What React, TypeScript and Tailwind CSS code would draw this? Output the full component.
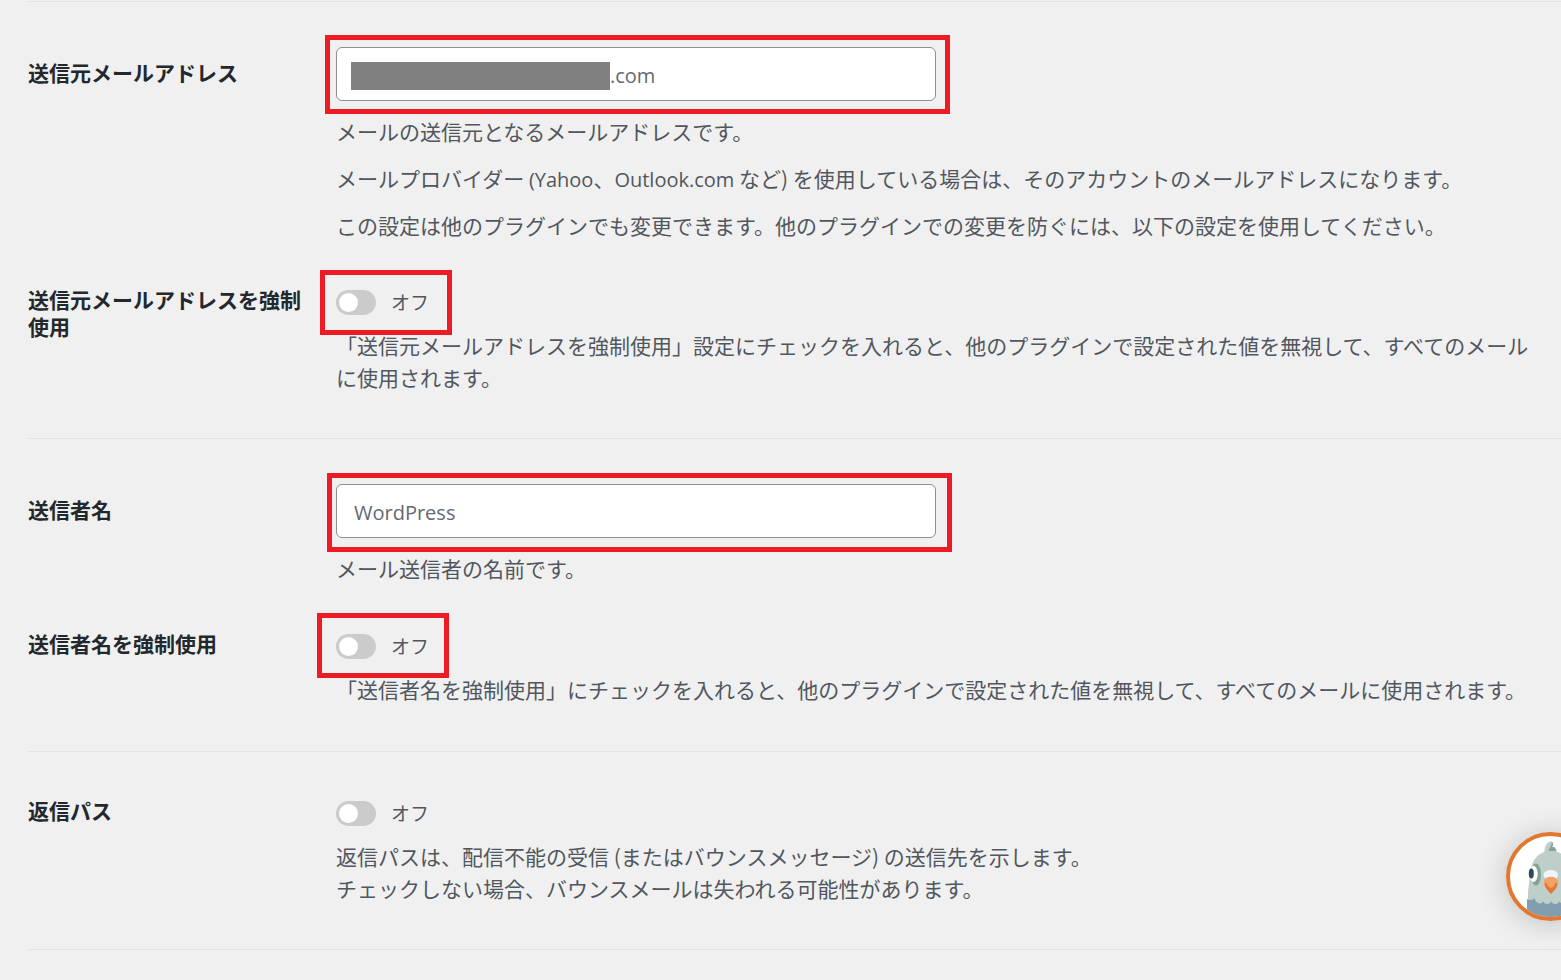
import { useState } from "react";
import type { ReactNode } from "react";

function Section({ children }: { children: ReactNode }) {
  return <section className="ml-7 flex flex-col border-b border-[#e4e4e4] pr-5">{children}</section>;
}

function Row({ id, label, className, labelClass, children }: { id: string; label: string; className: string; labelClass: string; children: ReactNode }) {
  return (
    <div className={`flex gap-7 ${className}`}>
      <div className={`w-[280px] shrink-0 ${labelClass}`}>
        <label htmlFor={id} className="block font-bold leading-[27px] text-[#23282c]">
          {label}
        </label>
      </div>
      <div className="min-w-0 flex-1">{children}</div>
    </div>
  );
}

function Toggle({ id, highlight }: { id: string; highlight?: string }) {
  const [on, setOn] = useState(false);
  return (
    <div className="relative flex h-[25px] w-fit items-center gap-[15px]">
      <input
        id={id}
        type="checkbox"
        role="switch"
        checked={on}
        onChange={(e) => setOn(e.target.checked)}
        className="relative h-[25px] w-10 appearance-none rounded-full bg-[#cbcbcb] before:absolute before:top-[3px] before:left-[3px] before:size-[19px] before:rounded-full before:bg-white checked:bg-[#e27730] checked:before:left-[18px]"
      />
      <label htmlFor={id} className="pb-0.5 text-[19px]">
        {on ? "オン" : "オフ"}
      </label>
      {highlight && <span className={`pointer-events-none absolute h-[65px] w-[132px] border-5 border-[#ed1c24] ${highlight}`} />}
    </div>
  );
}

function Latin({ children }: { children: ReactNode }) {
  return <span className="font-['Open_Sans',sans-serif] text-[20px] leading-none">{children}</span>;
}

const inputClass =
  "block h-[54px] w-full rounded-md border border-[#8c8f94] bg-white pt-0.5 pr-4 font-['Open_Sans','Noto_Sans_CJK_JP',sans-serif] text-[20px] text-[#646970] outline-none";

function Pigeon() {
  return (
    <svg viewBox="0 0 89 89" className="block size-[89px]" aria-hidden="true">
      <defs>
        <clipPath id="disc">
          <circle cx="44.5" cy="44.5" r="40.5" />
        </clipPath>
      </defs>
      <circle cx="44.5" cy="44.5" r="42.5" fill="#fff" />
      <g clipPath="url(#disc)">
        <path d="M38.500 21C38 15 41 9.500 45 9.500C47.500 10 47.500 13 46 16C48.500 14.500 50 16 49.500 17.500C51 18 51 19 50.500 21Z" fill="#bdcfc8" />
        <path d="M45.500 10C47.500 10.500 47.500 13 46 15.500C48 14.500 49.500 15.500 49.500 17C51 17.500 50.500 19 48 19C45.500 19.500 43.500 19.500 42.500 19C43 16 46 14 45.500 10Z" fill="#86a196" />
        <path d="M21.500 90L22 60L24 42C25 29 32 19 45 19C58 19 65 29 66 42L68 60L68.500 90Z" fill="#bdcfc8" />
        <ellipse cx="30" cy="42.500" rx="5" ry="11" fill="#86a196" />
        <ellipse cx="60" cy="42.500" rx="5" ry="11" fill="#86a196" />
        <ellipse cx="27.500" cy="42" rx="4.200" ry="8" fill="#fff" />
        <ellipse cx="62.500" cy="42" rx="4.200" ry="8" fill="#fff" />
        <ellipse cx="25.300" cy="41.500" rx="2.500" ry="5" fill="#2d4a5c" />
        <ellipse cx="64.700" cy="41.500" rx="2.500" ry="5" fill="#2d4a5c" />
        <ellipse cx="44.800" cy="43" rx="7.300" ry="5" fill="#edf5fa" />
        <path d="M38 50C38 43 52 43 52 50C52 55 48 58 45 62C42 58 38 55 38 50Z" fill="#f4a066" />
        <path d="M38.500 52L40.500 50.500C41 54 43 55 45 56C47 55 49 54 49.500 50.500L51.500 52C51 56 47.500 59 45 62C42.500 59 39 56 38.500 52Z" fill="#e27730" />
        <path d="M21 67C24 68.500 27 68 28.500 66C29.500 72 36 73 37 69C38 73 44.500 73 45 69C46 73 52.500 73 53.500 69C54.500 73 60.500 72 61.500 66L69 67V90H21Z" fill="#809eb0" />
      </g>
      <circle cx="44.500" cy="44.500" r="42.500" fill="none" stroke="#e27730" strokeWidth="4" />
    </svg>
  );
}

export default function App() {
  const [email, setEmail] = useState(".com");
  const [name, setName] = useState("WordPress");
  return (
    <main className="min-h-screen overflow-hidden bg-[#f0f0f0] pt-px font-['Noto_Sans_CJK_JP',sans-serif] text-[21px] leading-8 text-[#50575e]" lang="ja">
      <div className="ml-7 border-t border-[#e4e4e4]" />
      <Section>
        <Row id="from-email" label="送信元メールアドレス" className="pt-[45px]" labelClass="pt-3">
          <div className="relative w-[600px]">
            <input id="from-email" type="text" value={email} onChange={(e) => setEmail(e.target.value)} className={`${inputClass} pl-[273px]`} />
            <span className="absolute top-[15px] left-[15px] h-7 w-[259px] bg-[#808080]" />
            <span className="pointer-events-none absolute -top-3 -right-3.5 -bottom-[13px] -left-[11px] border-5 border-[#ed1c24]" />
          </div>
          <div className="mt-3.5 flex flex-col gap-[15px]">
            <p>メールの送信元となるメールアドレスです。</p>
            <p>
              メールプロバイダー <Latin>(Yahoo</Latin>、<Latin>Outlook.com</Latin> など) を使用している場合は、そのアカウントのメールアドレスになります。
            </p>
            <p>この設定は他のプラグインでも変更できます。他のプラグインでの変更を防ぐには、以下の設定を使用してください。</p>
          </div>
        </Row>
        <Row id="force-email" label="送信元メールアドレスを強制使用" className="pt-[49px] pb-[45px]" labelClass="-mt-1">
          <Toggle id="force-email" highlight="-top-5 -left-4" />
          <p className="mt-3.5">「送信元メールアドレスを強制使用」設定にチェックを入れると、他のプラグインで設定された値を無視して、すべてのメールに使用されます。</p>
        </Row>
      </Section>
      <Section>
        <Row id="from-name" label="送信者名" className="pt-[45px]" labelClass="pt-3">
          <div className="relative w-[600px]">
            <input id="from-name" type="text" value={name} onChange={(e) => setName(e.target.value)} className={`${inputClass} pl-[17px]`} />
            <span className="pointer-events-none absolute -top-[11px] -right-4 -bottom-3.5 -left-[9px] border-5 border-[#ed1c24]" />
          </div>
          <p className="mt-3.5">メール送信者の名前です。</p>
        </Row>
        <Row id="force-name" label="送信者名を強制使用" className="pt-[50px] pb-[46px]" labelClass="-mt-1">
          <Toggle id="force-name" highlight="-top-[21px] -left-[19px]" />
          <p className="mt-3.5">「送信者名を強制使用」にチェックを入れると、他のプラグインで設定された値を無視して、すべてのメールに使用されます。</p>
        </Row>
      </Section>
      <Section>
        <Row id="return-path" label="返信パス" className="pt-[49px] pb-[45px]" labelClass="-mt-1">
          <Toggle id="return-path" />
          <p className="mt-3.5">
            返信パスは、配信不能の受信 (またはバウンスメッセージ) の送信先を示します。
            <br />
            チェックしない場合、バウンスメールは失われる可能性があります。
          </p>
        </Row>
      </Section>
      <button type="button" aria-label="メニュー" className="fixed -right-[34px] bottom-[59px] rounded-full shadow-[0_3px_30px_rgba(0,0,0,0.2)]">
        <Pigeon />
      </button>
    </main>
  );
}
